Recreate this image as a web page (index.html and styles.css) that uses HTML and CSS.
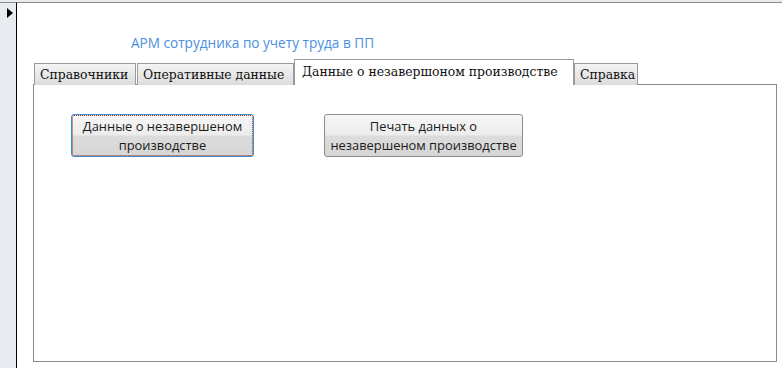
FILE: index.html
```html
<!DOCTYPE html>
<html>
<head>
    <title>АРМ сотрудника по учету труда в ПП</title>
    <link rel="stylesheet" href="styles.css">
</head>
<body>
    <div class="window">
        <div class="selector">
            <span class="arrow"></span>
        </div>
        <div class="form">
            <div class="title">АРМ сотрудника по учету труда в ПП</div>
            <div class="tabs">
                <div class="tab tab-refs">Справочники</div>
                <div class="tab tab-ops">Оперативные данные</div>
                <div class="tab tab-wip active">Данные о незавершоном производстве</div>
                <div class="tab tab-help">Справка</div>
            </div>
            <div class="panel">
                <div class="button-group">
                    <button type="button" class="cmd cmd-data focused">Данные о незавершеном<br>производстве</button>
                    <button type="button" class="cmd cmd-print">Печать данных о<br>незавершеном производстве</button>
                </div>
            </div>
        </div>
    </div>
</body>
</html>
```

FILE: styles.css
```css
html, body {
    margin: 0;
    padding: 0;
    height: 100%;
    background-color: white;
}
.window {
    display: flex;
    height: 368px;
    border-top: 2px solid #e8ebf0;
    box-sizing: border-box;
}
.selector {
    width: 16px;
    background-color: #e8ebf0;
    border-right: 1px solid #000;
    border-top: 1px solid #8c8c8c;
    position: relative;
}
.arrow {
    position: absolute;
    left: 7px;
    top: 5px;
    width: 0;
    height: 0;
    border-top: 5px solid transparent;
    border-bottom: 5px solid transparent;
    border-left: 6px solid #000;
}
.form {
    flex: 1;
    border-top: 1px solid #8c8c8c;
    padding: 31px 5px 6px 16px;
    display: flex;
    flex-direction: column;
}
.title {
    margin-left: 98px;
    font-family: "Open Sans", sans-serif;
    font-size: 13.6px;
    line-height: 18px;
    color: #4a8fe0;
}
.tabs {
    display: flex;
    align-items: flex-end;
    margin-top: 8px;
    padding-left: 1px;
    height: 25px;
    position: relative;
    z-index: 1;
    margin-bottom: -1px;
}
.tab {
    font-family: "DejaVu Serif", serif;
    font-size: 12.4px;
    white-space: nowrap;
    overflow: hidden;
    height: 22px;
    line-height: 21px;
    padding: 0 5px;
    box-sizing: border-box;
    border: 1px solid #9a9a9e;
    border-bottom: none;
    background: linear-gradient(#f4f4f4, #dcdcdc);
    color: #101010;
}
.tab.active {
    height: 26px;
    line-height: 24px;
    background: white;
    padding: 0 7px;
}
.tab-refs { width: 102px; margin-right: 1px; }
.tab-ops { width: 157px; }
.tab-wip { width: 280px; }
.tab-help { width: 64px; }
.panel {
    flex: 1;
    border: 1px solid #8a8a90;
    padding: 29px 0 0 37px;
}
.button-group {
    display: flex;
    gap: 70px;
}
.cmd {
    height: 43px;
    padding: 0;
    font-family: "Open Sans", sans-serif;
    font-size: 12.9px;
    line-height: 19px;
    color: #1a1a1a;
    border: 1px solid #8c8c8c;
    border-radius: 3px;
    background: linear-gradient(#f7f7f7 0%, #ececec 48%, #dcdcdc 52%, #d6d6d6 100%);
}
.cmd-data {
    width: 183px;
}
.cmd-print {
    width: 199px;
}
.cmd.focused {
    border: 1px solid #3c8fd6;
    outline: 1px dotted #a03020;
    outline-offset: -2px;
}
```
